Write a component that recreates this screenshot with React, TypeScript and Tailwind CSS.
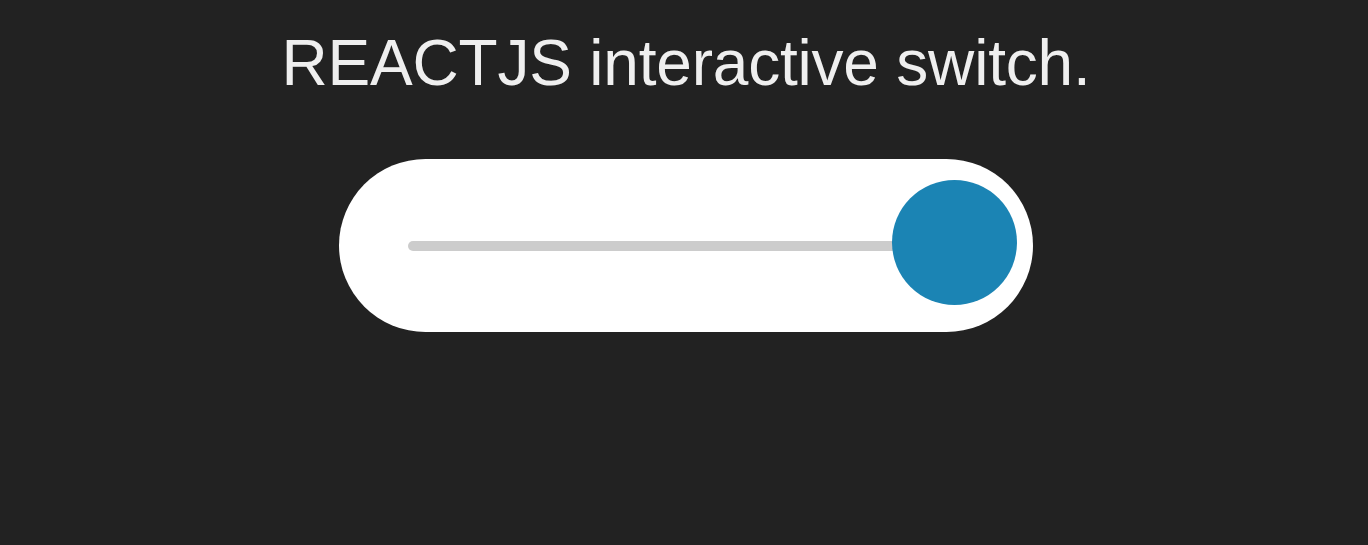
export default function App() {
  return (
    <div className="min-h-screen h-[545px] bg-[#222222] flex flex-col items-center pt-[31px] pl-[4px] font-['Liberation_Sans',Arial,sans-serif]">
      <h1 className="text-[64px] leading-[64px] text-[#efefef] font-normal tracking-[-0.2px]">
        REACTJS interactive switch.
      </h1>
      <div className="relative mt-[64px] flex h-[173px] w-[694px] items-center rounded-full bg-white pl-[69px] pr-[79px]">
        <div className="h-[10px] flex-1 rounded-full bg-[#cccccc]" />
        <div className="absolute left-[553px] top-[21px] h-[125px] w-[125px] rounded-full bg-[#1b84b4]" />
      </div>
    </div>
  );
}
